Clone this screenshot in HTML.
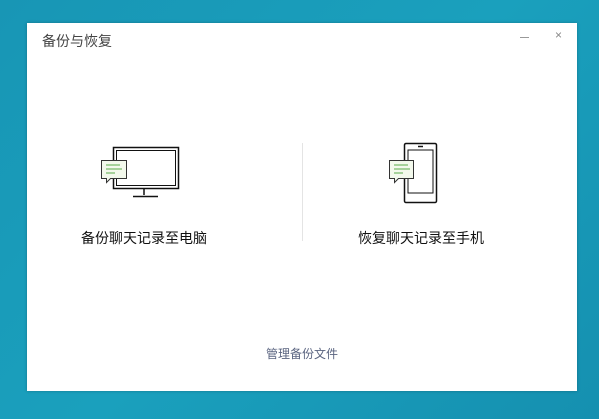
<!DOCTYPE html><html><head><meta charset="utf-8"><style>
body{margin:0;width:599px;height:419px;background:linear-gradient(135deg,#1896b5,#1aa0bd 50%,#1590b0);position:relative;overflow:hidden;font-family:"Liberation Sans","Noto Sans CJK SC",sans-serif}
.win{position:absolute;left:27px;top:23px;width:550px;height:368px;background:#fff;box-shadow:0 0 3px rgba(0,0,0,.25)}
.t{position:absolute;font-size:14px;white-space:nowrap}
</style></head><body>
<div class="win"></div>
<div class="t" style="left:42px;top:31px;color:#444">备份与恢复</div>
<div style="position:absolute;left:520px;top:37px;width:9px;height:1px;background:#999"></div>
<div class="t" style="left:555px;top:28px;color:#888;font-size:12px">×</div>
<svg style="position:absolute;left:0;top:0" width="599" height="419">
<g fill="none" stroke="#111" stroke-width="1.5">
<rect x="113.5" y="147.5" width="65" height="41"/>
<rect x="116.5" y="150.5" width="59" height="35" stroke-width="1"/>
<path d="M144 189v6M133 196.5h25"/>
<rect x="404.5" y="143.5" width="32" height="59" rx="1.5"/>
<rect x="408" y="150" width="25" height="43" stroke-width="1"/>
<path d="M418 146.5h5"/>
</g>
<g stroke="#333" stroke-width="1" fill="#f3f9ec">
<path d="M101.5 160.5h25v18h-16l-4 4v-4h-5z"/>
<path d="M389.5 160.5h24v18h-15l-4 4v-4h-5z"/>
</g>
<g stroke="#5aab4a" stroke-width="1">
<path d="M106 165h14M106 169h16M106 173h9M394 165h14M394 169h16M394 173h9"/>
</g>
<path d="M302.5 143v98" stroke="#e4e4e4"/>
</svg>
<div class="t" style="left:81px;top:228px;color:#111">备份聊天记录至电脑</div>
<div class="t" style="left:358px;top:228px;color:#111">恢复聊天记录至手机</div>
<div class="t" style="left:266px;top:345px;color:#5a6480;font-size:12px">管理备份文件</div>
</body></html>
